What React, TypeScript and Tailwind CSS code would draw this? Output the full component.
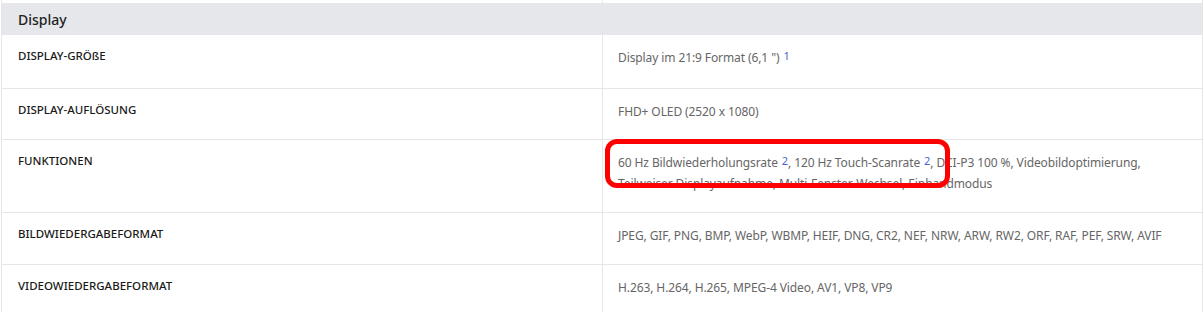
import type { ReactNode } from 'react';

interface SpecRow {
  label: string;
  value: ReactNode;
  height: string;
}

function Sup({ children }: { children: ReactNode }) {
  return <sup className="ml-[4px] text-[11px] text-[#4b5fd6] relative -top-[2px]">{children}</sup>;
}

const rows: SpecRow[] = [
  {
    label: 'DISPLAY-GRÖßE',
    value: (
      <>
        Display im 21:9 Format (6,1 ")<Sup>1</Sup>
      </>
    ),
    height: 'h-[53px]',
  },
  { label: 'DISPLAY-AUFLÖSUNG', value: 'FHD+ OLED (2520 x 1080)', height: 'h-[51px] border-t' },
  {
    label: 'FUNKTIONEN',
    value: (
      <>
        60 Hz Bildwiederholungsrate<Sup>2</Sup>, 120 Hz Touch-Scanrate<Sup>2</Sup>, DCI-P3 100 %,
        Videobildoptimierung,
        <br />
        Teilweiser Displayaufnahme, Multi-Fenster-Wechsel, Einhandmodus
      </>
    ),
    height: 'h-[73px] border-t',
  },
  {
    label: 'BILDWIEDERGABEFORMAT',
    value: 'JPEG, GIF, PNG, BMP, WebP, WBMP, HEIF, DNG, CR2, NEF, NRW, ARW, RW2, ORF, RAF, PEF, SRW, AVIF',
    height: 'h-[52px] border-t',
  },
  {
    label: 'VIDEOWIEDERGABEFORMAT',
    value: 'H.263, H.264, H.265, MPEG-4 Video, AV1, VP8, VP9',
    height: 'h-[52px] border-t',
  },
];

export default function App() {
  return (
    <div className="w-[1204px] h-[312px] bg-white overflow-hidden font-['Noto_Sans',sans-serif]">
      <div className="relative w-[1202px] ml-px border-l border-r border-[#e6e6e6]">
        <div className="grid grid-cols-[601px_1fr] h-[3px]">
          <div className="border-r border-[#e6e6e6]" />
          <div />
        </div>
        <div className="h-[32px] bg-[#e6e7eb] flex items-center pl-[16px]">
          <span className="text-[14px] font-medium text-[#222]">Display</span>
        </div>
        {rows.map((row) => (
          <div
            key={row.label}
            className={`grid grid-cols-[601px_1fr] border-[#e6e6e6] ${row.height}`}
          >
            <div className="border-r border-[#e6e6e6] pl-[16px] pt-[13px]">
              <span className="text-[11.5px] font-medium text-[#1a1a1a] leading-[16px] block">
                {row.label}
              </span>
            </div>
            <div className="pl-[15px] pr-[8px] pt-[12px] text-[12px] leading-[21px] text-[#666] tracking-[-0.1px]">
              {row.value}
            </div>
          </div>
        ))}
        <div className="absolute left-[603px] top-[139px] w-[345px] h-[49px] border-[5px] border-[#ff0000] rounded-[12px] pointer-events-none" />
      </div>
    </div>
  );
}
